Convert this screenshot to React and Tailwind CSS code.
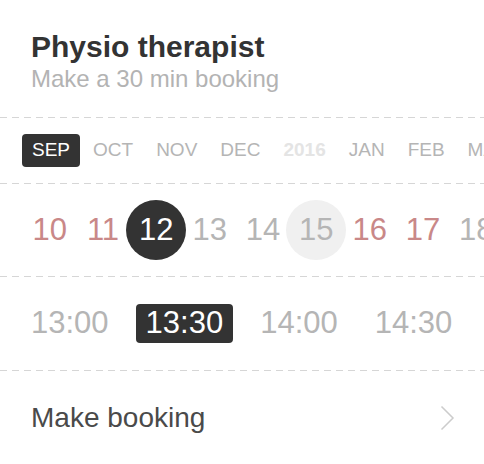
import React from "react";

const months = ["SEP", "OCT", "NOV", "DEC", "2016", "JAN", "FEB", "MAR"];
const days = [
  { d: 10, tone: "red" },
  { d: 11, tone: "red" },
  { d: 12, tone: "active" },
  { d: 13, tone: "gray" },
  { d: 14, tone: "gray" },
  { d: 15, tone: "today" },
  { d: 16, tone: "red" },
  { d: 17, tone: "red" },
  { d: 18, tone: "gray" },
];
const times = ["13:00", "13:30", "14:00", "14:30"];

function Dashes() {
  return <div className="h-px w-full shrink-0 bg-[repeating-linear-gradient(to_right,#d6d6d6_0_7px,transparent_7px_12px)]" />;
}

function Day({ d, tone }) {
  const base = "flex w-[53.33px] shrink-0 justify-center";
  if (tone === "active")
    return (
      <div className={base}>
        <div className="flex h-[60px] w-[60px] shrink-0 items-center justify-center rounded-full bg-[#333333] text-white">{d}</div>
      </div>
    );
  if (tone === "today")
    return (
      <div className={base}>
        <div className="flex h-[60px] w-[60px] shrink-0 items-center justify-center rounded-full bg-[#f0f0f0] text-[#b5b5b5]">{d}</div>
      </div>
    );
  return (
    <div className={base}>
      <div className={"flex h-[60px] items-center " + (tone === "red" ? "text-[#c98888]" : "text-[#b5b5b5]")}>{d}</div>
    </div>
  );
}

export default function App() {
  return (
    <div className="flex h-[464px] w-[484px] flex-col overflow-hidden bg-white font-['Liberation_Sans',Arial,sans-serif]">
      <div className="px-[31px] pt-[32px] pb-[26px]">
        <div className="text-[30px] leading-[30px] font-semibold text-[#333333]">Physio therapist</div>
        <div className="mt-[5px] text-[24px] leading-[24px] text-[#b3b3b3]">Make a 30 min booking</div>
      </div>
      <Dashes />
      <div className="flex h-[65px] shrink-0 items-center gap-[3px] pl-[22px] text-[19px] whitespace-nowrap">
        {months.map((m, i) => (
          <div
            key={m}
            className={
              "flex h-[33px] items-center rounded-[4px] px-[10px] " +
              (i === 0 ? "bg-[#333333] text-white" : m === "2016" ? "font-bold text-[#e4e4e4]" : "text-[#b5b5b5]")
            }
          >
            {m}
          </div>
        ))}
      </div>
      <Dashes />
      <div className="flex h-[92px] shrink-0 items-center pl-[23px] text-[31px]">
        {days.map((x) => (
          <Day key={x.d} {...x} />
        ))}
      </div>
      <Dashes />
      <div className="flex h-[93px] shrink-0 items-center gap-[17px] pl-[21px] text-[31px] whitespace-nowrap">
        {times.map((t, i) => (
          <div
            key={t}
            className={"flex h-[39px] items-center rounded-[4px] px-[10px] " + (i === 1 ? "bg-[#333333] text-white" : "text-[#b5b5b5]")}
          >
            {t}
          </div>
        ))}
      </div>
      <Dashes />
      <div className="flex flex-1 items-center justify-between pr-[29px] pl-[31px]">
        <span className="text-[28px] text-[#4a4a4a]">Make booking</span>
        <svg width="15" height="26" viewBox="0 0 15 26" fill="none">
          <path d="M1.5 1.5 L13 13 L1.5 24.5" stroke="#cccccc" strokeWidth="1.5" />
        </svg>
      </div>
    </div>
  );
}
